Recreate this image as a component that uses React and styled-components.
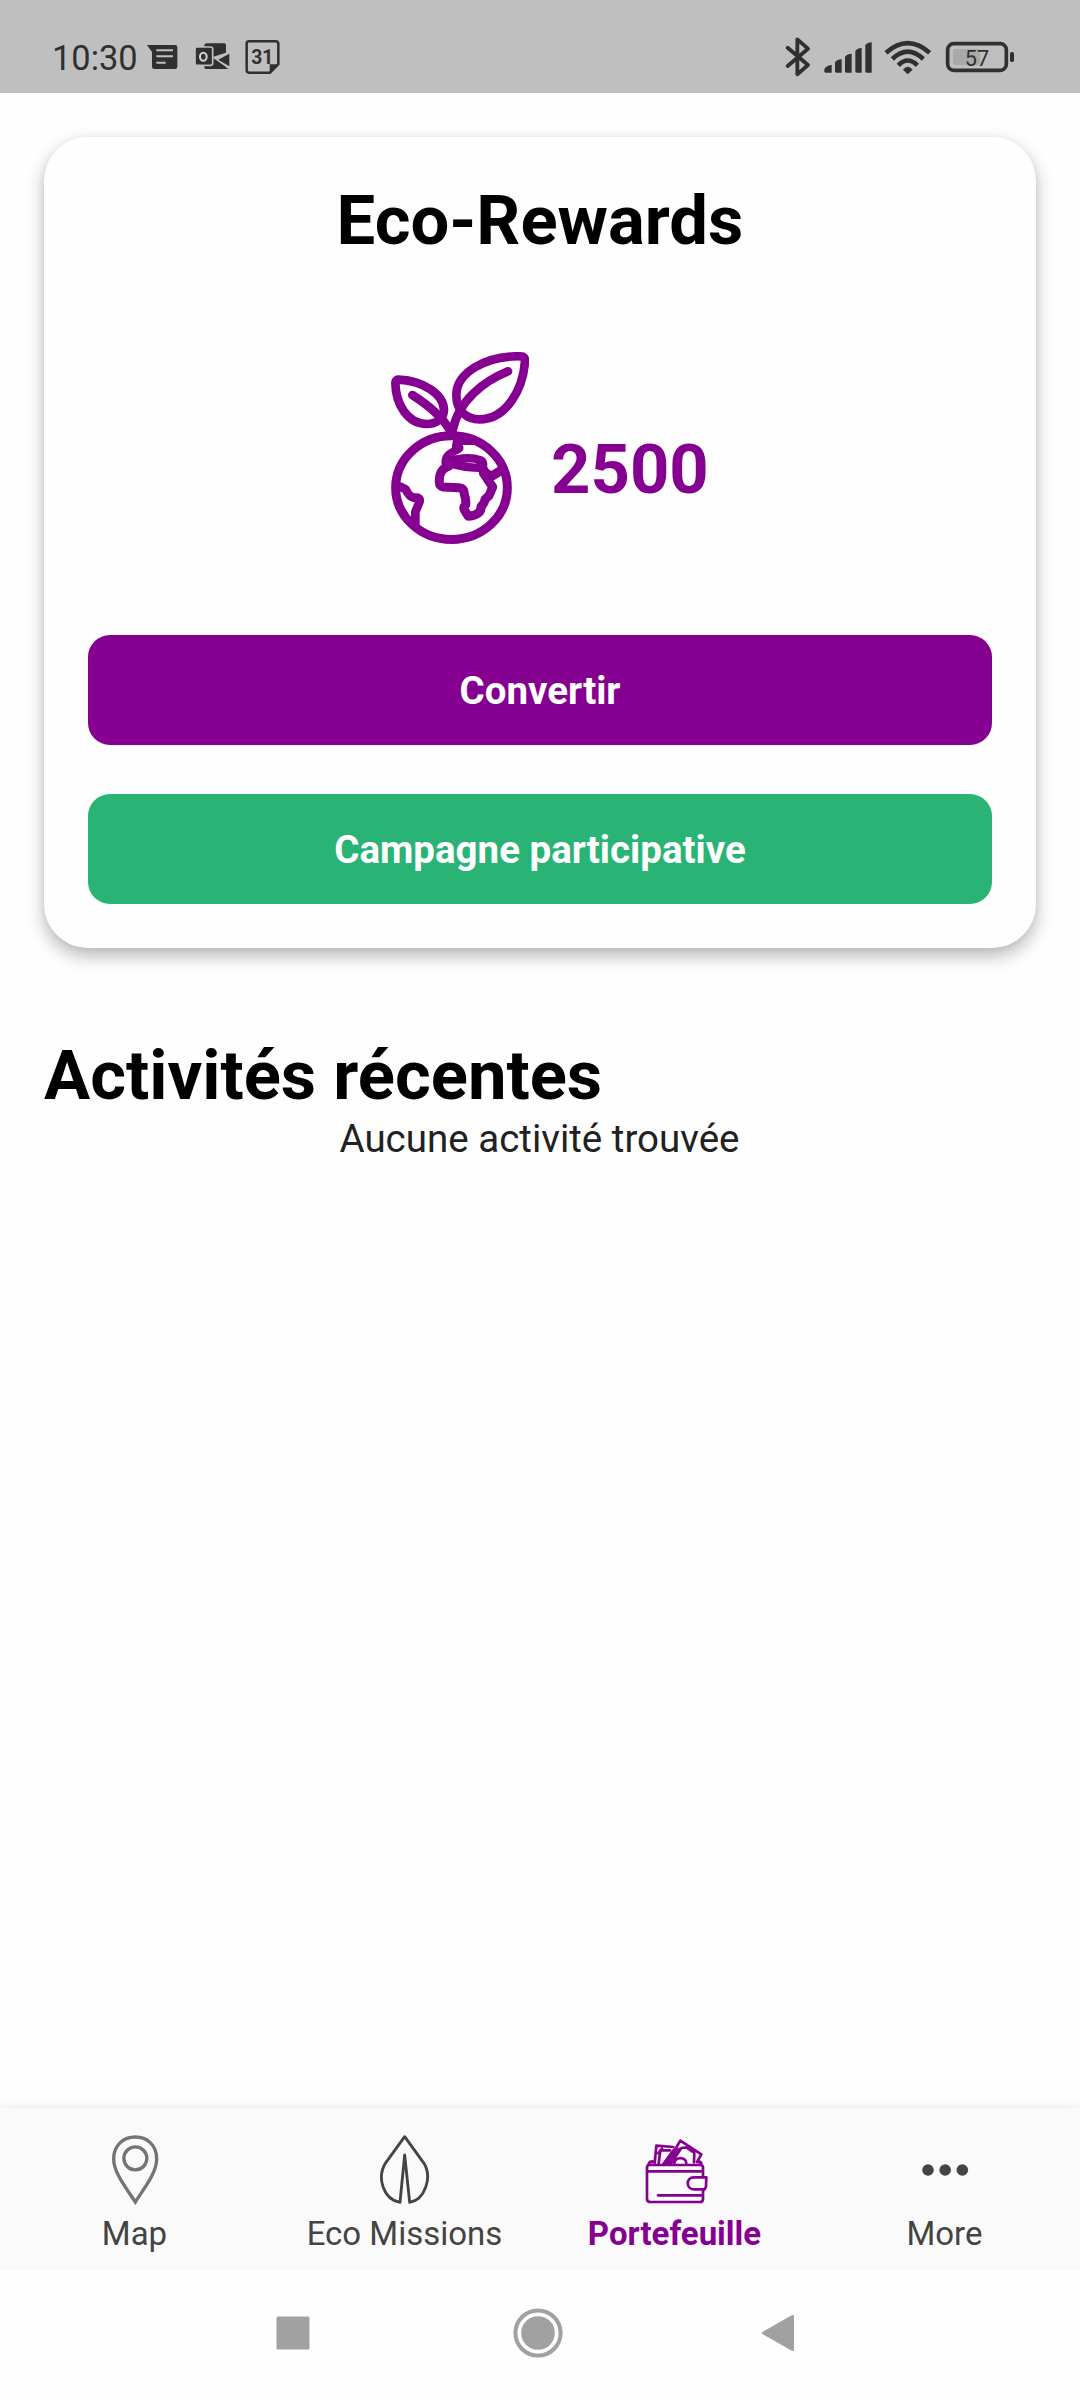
import React from 'react';
import styled, { createGlobalStyle } from 'styled-components';

const purple = '#850090';
const green = '#29b475';
const statusInk = '#303030';

const GlobalStyle = createGlobalStyle`
  * {
    box-sizing: border-box;
  }
  body {
    margin: 0;
    background: #fefefe;
    font-family: Roboto, sans-serif;
  }
`;

const Screen = styled.div`
  display: flex;
  flex-direction: column;
  width: 1080px;
  height: 2400px;
  overflow: hidden;
`;

const StatusBar = styled.header`
  display: flex;
  align-items: flex-start;
  justify-content: space-between;
  height: 93px;
  padding: 20px 40px 0 52px;
  background: #bfbfbf;
  color: ${statusInk};
`;

const StatusGroup = styled.div`
  display: flex;
  align-items: flex-start;
`;

const Clock = styled.span`
  width: 95px;
  padding-top: 18px;
  font-size: 34.4px;
  line-height: 40px;
`;

const Content = styled.main`
  flex: 1;
  padding: 44px 44px 0;
`;

const Card = styled.section`
  height: 811px;
  padding: 43px 44px 0;
  border-radius: 44px;
  background: #fefefe;
  box-shadow: 0 8px 18px rgba(0, 0, 0, 0.28), 0 0 8px rgba(0, 0, 0, 0.04);
`;

const Title = styled.h1`
  margin: 0;
  font-size: 68.75px;
  line-height: 81px;
  font-weight: 700;
  color: #000;
  text-align: ${(props) => props.$align || 'left'};
`;

const Score = styled.div`
  display: flex;
  align-items: flex-start;
  height: 374px;
  padding: 91px 0 0 303px;
`;

const Points = styled.span`
  margin: 77px 0 0 22px;
  font-size: 68.75px;
  line-height: 81px;
  font-weight: 700;
  color: ${purple};
`;

const Button = styled.button`
  display: block;
  width: 100%;
  height: 110px;
  margin: 0 0 49px;
  padding: 2px 0 0;
  border: none;
  border-radius: 22px;
  background: ${(props) => props.$color};
  color: #fff;
  font-family: inherit;
  font-size: 38.5px;
  font-weight: 700;
  line-height: 108px;
`;

const Activities = styled.section`
  padding-top: 87px;
`;

const Empty = styled.p`
  margin: 0;
  padding-right: 1px;
  font-size: 38.5px;
  line-height: 45px;
  color: #212121;
  text-align: center;
`;

const TabBar = styled.nav`
  display: grid;
  grid-template-columns: repeat(4, 1fr);
  height: 162px;
  padding-top: 27px;
  background: #fafafa;
  box-shadow: 0 0 12px rgba(0, 0, 0, 0.1);
`;

const Tab = styled.a`
  display: flex;
  flex-direction: column;
  align-items: center;
  color: ${(props) => (props.$active ? purple : '#444')};
  font-size: 33px;
  font-weight: ${(props) => (props.$active ? 700 : 400)};
  line-height: 40px;
`;

const TabIcon = styled.svg`
  width: 70px;
  height: 70px;
  margin-bottom: 9px;
  fill: none;
  stroke: currentColor;
`;

const TabLabel = styled.span`
  padding-right: 1px;
`;

const SystemNav = styled.footer`
  position: relative;
  display: flex;
  align-items: center;
  justify-content: space-between;
  height: 130px;
  padding: 0 285px 5px 276px;
  background: #fefefe;
`;

const HomeButton = styled.svg`
  width: 50px;
  height: 50px;
  margin-left: 4px;
`;

const MessageIcon = () => (
  <svg width="45" height="80" viewBox="350 0 135 240">
    <path d="M350 75H434q7 0 7 7V140q0 7-7 7H372q-7 0-7-7V96Z" fill={statusInk} />
    <path d="M378 91H428M378 109H428M378 128H406" stroke="#bfbfbf" strokeWidth="6" />
  </svg>
);

const OutlookIcon = () => (
  <svg width="50" height="80" viewBox="485 0 150 240">
    <path d="M530 70H582q5 0 5 5V147H527q-5 0-5-5V75q0-5 8-5Z" fill={statusInk} />
    <path d="M545 112 600 94V150Z" fill="#bfbfbf" />
    <path d="M564 119 597 101V139ZM545 121 595 147H545Z" fill={statusInk} />
    <rect x="494" y="81" width="53" height="55" rx="6" fill={statusInk} stroke="#bfbfbf" strokeWidth="5" />
    <ellipse cx="519" cy="110" rx="10" ry="12" fill="none" stroke="#d4d4d4" strokeWidth="6" />
  </svg>
);

const CalendarIcon = () => (
  <svg width="40" height="80" viewBox="635 0 120 240">
    <path d="M656 64H736q8 0 8 8V133L719 158H656q-7 0-7-7V71q0-7 7-7Z" fill="none" stroke={statusInk} strokeWidth="7.500" />
    <path d="M718 160V133H745Z" fill={statusInk} />
    <text x="696" y="131" textAnchor="middle" fontFamily="Roboto, sans-serif" fontWeight="700" fontSize="58" fill={statusInk}>31</text>
  </svg>
);

const BluetoothIcon = () => (
  <svg width="50" height="80" viewBox="0 0 150 240">
    <path d="M53 83 114 135 82 163V58L114 86 53 138" fill="none" stroke={statusInk} strokeWidth="11.500" strokeLinecap="round" strokeLinejoin="round" />
  </svg>
);

const SignalIcon = () => (
  <svg width="60" height="80" viewBox="150 0 180 240" fill={statusInk}>
    <path d="M163 154V147Q172 135 185 135V158H167q-4 0-4-4Z" />
    <path d="M195 154V127Q202 118 215 118V158H199q-4 0-4-4Z" />
    <path d="M225 154V110Q232 101 245 101V158H229q-4 0-4-4Z" />
    <path d="M256 154V93Q262 84 275 84V158H260q-4 0-4-4Z" />
    <path d="M286 154V76Q292 67 305 67V158H290q-4 0-4-4Z" />
  </svg>
);

const WifiIcon = () => (
  <svg width="60" height="80" viewBox="330 0 180 240" fill="none" stroke={statusInk} strokeWidth="14">
    <path d="M348 98Q413 41 479 98M367 117Q413 73 460 117M385 136Q413 107 442 136" />
    <path d="M399 149Q413 132 428 149L413 163Z" fill={statusInk} stroke="none" />
  </svg>
);

const BatteryIcon = () => (
  <svg width="100" height="80" viewBox="510 0 300 240">
    <rect x="549" y="87" width="82" height="48" rx="8" fill="#a9a9a9" />
    <rect x="533" y="71" width="176" height="80" rx="18" fill="none" stroke={statusInk} strokeWidth="11" />
    <rect x="720" y="96" width="12" height="30" rx="5" fill={statusInk} />
    <text x="621" y="137" textAnchor="middle" fontFamily="Roboto, sans-serif" fontSize="65" fill={statusInk}>57</text>
  </svg>
);

const EarthPlant = () => (
  <svg width="138" height="192" viewBox="63 66 414 576" fill="none" stroke={purple} strokeWidth="26" strokeLinecap="round" strokeLinejoin="round">
    {/* globe */}
    <ellipse cx="244.500" cy="473" rx="167.500" ry="155.500" strokeWidth="27" />
    {/* leaves */}
    <path d="M76 158Q77 148 88 149C160 153 221 192 222 240C221 267 198 282 170 282C112 282 77 222 76 158Z" />
    <path d="M127 195C165 219 213 253 242 304" />
    <path d="M453 79Q465 79 465 92C460 175 411 267 329 268C291 268 259 245 259 195C259 130 345 76 453 79Z" />
    <path d="M414 124C342 154 265 210 247 304" />
    <path d="M235 278 231 306H259L256 278Z" fill={purple} stroke="none" />
    {/* europe */}
    <path d="M263 325 258 350Q277 352 260 360Q224 375 227 399Q287 375 333 391Q342 395 339 414Q285 414 236 399" strokeWidth="25" />
    <path d="M262 333H313" strokeWidth="24" />
    {/* africa */}
    <path d="M236 409C215 416 207 430 208 456Q208 469 220 471L267 473Q284 475 283 493Q289 508 287 525Q278 532 285 543L295 559Q335 554 333 530Q343 521 345 508L357 497L368 471L340 429" strokeWidth="27" />
    <path d="M341 420Q351 437 366 438L399 418" strokeWidth="28" />
    {/* south america */}
    <path d="M91 470 107 478Q117 501 132 503Q151 500 149 514L136 546V588" strokeWidth="26" />
  </svg>
);

const SquareIcon = () => (
  <svg width="34" height="34" viewBox="0 0 34 34">
    <rect x="0.500" y="0.500" width="33" height="33" rx="1.500" fill="#a1a1a1" />
  </svg>
);

const HomeIcon = () => (
  <HomeButton viewBox="0 0 50 50">
    <circle cx="25" cy="25" r="22.600" fill="none" stroke="#a1a1a1" strokeWidth="4" />
    <circle cx="25" cy="25" r="16.800" fill="#a1a1a1" />
  </HomeButton>
);

const BackIcon = () => (
  <svg width="34" height="38" viewBox="0 0 34 38">
    <path d="M31.500 2.500V35.500L2.500 19Z" fill="#a1a1a1" stroke="#a1a1a1" strokeWidth="3" strokeLinejoin="round" />
  </svg>
);

const tabs = [
  {
    label: 'Map',
    icon: (
      <TabIcon viewBox="120 134 210 210" strokeWidth="10">
        <g stroke="#747474">
          <path d="M226 335C200 294 161 249 161 205C161 165 190 140 226 140C262 140 290 165 290 205C290 249 252 294 226 335Z" />
          <circle cx="226" cy="204" r="34.500" />
        </g>
      </TabIcon>
    ),
  },
  {
    label: 'Eco Missions',
    icon: (
      <TabIcon viewBox="930 134 210 210" strokeWidth="8.500" strokeLinejoin="round">
        <path d="M1034 139 1092 219C1118 263 1093 329 1049 336L1034 194 1020 336C970 327 950 263 976 219Z" />
      </TabIcon>
    ),
  },
  {
    label: 'Portefeuille',
    active: true,
    icon: (
      <TabIcon viewBox="240 134 210 210" strokeWidth="8" strokeLinejoin="round" strokeLinecap="round">
        <path d="M429 259V231Q429 224 420 224H268Q261 224 261 232V325Q261 335 272 335H420Q429 335 429 325V300M261 243H429M294 315H428" />
        <path d="M439 261H402C377 261 377 297 402 297H434L438 289Z" />
        <path d="M267 222Q268 214 278 214M423 222Q423 215 415 214" strokeWidth="10" />
        <path d="M284 220 289 166 340 170M296 219 301 180 330 180M306 175 295 189" />
        <path d="M319 221 361 151 424 192 411 215M332 221 364 173 379 171 403 188 402 216M343 219C345 198 378 198 379 219" />
        <path d="M338 178 306 222H329L358 174Z" fill="currentColor" strokeWidth="3" />
      </TabIcon>
    ),
  },
  {
    label: 'More',
    icon: (
      <TabIcon viewBox="1050 134 210 210">
        <g fill="currentColor" stroke="none">
          <circle cx="1104" cy="239" r="17.500" />
          <circle cx="1155.500" cy="239" r="17.500" />
          <circle cx="1207" cy="239" r="17.500" />
        </g>
      </TabIcon>
    ),
  },
];

const App = () => {
  return (
    <Screen>
      <GlobalStyle />
      <StatusBar>
        <StatusGroup>
          <Clock>10:30</Clock>
          <MessageIcon />
          <OutlookIcon />
          <CalendarIcon />
        </StatusGroup>
        <StatusGroup>
          <BluetoothIcon />
          <SignalIcon />
          <WifiIcon />
          <BatteryIcon />
        </StatusGroup>
      </StatusBar>

      <Content>
        <Card>
          <Title $align="center">Eco-Rewards</Title>
          <Score>
            <EarthPlant />
            <Points>2500</Points>
          </Score>
          <Button $color={purple}>Convertir</Button>
          <Button $color={green}>Campagne participative</Button>
        </Card>

        <Activities>
          <Title as="h2">Activités récentes</Title>
          <Empty>Aucune activité trouvée</Empty>
        </Activities>
      </Content>

      <TabBar>
        {tabs.map((tab) => (
          <Tab key={tab.label} $active={tab.active}>
            {tab.icon}
            <TabLabel>{tab.label}</TabLabel>
          </Tab>
        ))}
      </TabBar>

      <SystemNav>
        <SquareIcon />
        <HomeIcon />
        <BackIcon />
      </SystemNav>
    </Screen>
  );
};

export default App;
